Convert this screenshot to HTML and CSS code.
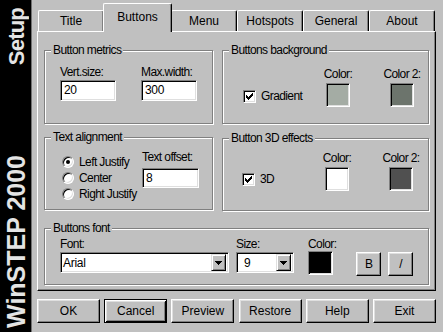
FILE: index.html
```html
<!DOCTYPE html>
<html>
<head>
<meta charset="utf-8">
<title>WinSTEP 2000 Setup</title>
<link rel="stylesheet" href="styles.css">
</head>
<body>
<div class="window">
  <aside class="strip">
    <div class="vtext v-setup">Setup</div>
    <div class="vtext v-brand">WinSTEP 2000</div>
  </aside>
  <main class="main">
    <nav class="tabs">
      <div class="tab t-title">Title</div>
      <div class="tab t-buttons active">Buttons</div>
      <div class="tab t-menu">Menu</div>
      <div class="tab t-hot">Hotspots</div>
      <div class="tab t-gen">General</div>
      <div class="tab t-about">About</div>
    </nav>
    <section class="panel">
      <div class="group g-metrics">
        <span class="caption">Button metrics</span>
        <div class="field">
          <span class="lbl">Vert.size:</span>
          <div class="edit e-metric">20</div>
        </div>
        <div class="field">
          <span class="lbl">Max.width:</span>
          <div class="edit e-metric">300</div>
        </div>
      </div>
      <div class="group g-bg">
        <span class="caption">Buttons background</span>
        <div class="check-row">
          <span class="cb"><svg width="13" height="13" viewBox="0 0 13 13"><path d="M3 5h1v3h-1zM4 6h1v3h-1zM5 7h1v3h-1zM6 6h1v3h-1zM7 5h1v3h-1zM8 4h1v3h-1zM9 3h1v3h-1z" fill="#000" shape-rendering="crispEdges"/></svg></span>
          <span class="lbl">Gradient</span>
        </div>
        <div class="color-col">
          <span class="lbl">Color:</span>
          <span class="swatch sw-green1"></span>
        </div>
        <div class="color-col">
          <span class="lbl">Color 2:</span>
          <span class="swatch sw-green2"></span>
        </div>
      </div>
      <div class="group g-align">
        <span class="caption">Text alignment</span>
        <div class="radios">
          <div class="radio-row"><span class="rb on"></span><span class="lbl">Left Justify</span></div>
          <div class="radio-row"><span class="rb"></span><span class="lbl">Center</span></div>
          <div class="radio-row"><span class="rb"></span><span class="lbl">Right Justify</span></div>
        </div>
        <div class="field f-offset">
          <span class="lbl">Text offset:</span>
          <div class="edit e-offset">8</div>
        </div>
      </div>
      <div class="group g-3d">
        <span class="caption">Button 3D effects</span>
        <div class="check-row">
          <span class="cb"><svg width="13" height="13" viewBox="0 0 13 13"><path d="M3 5h1v3h-1zM4 6h1v3h-1zM5 7h1v3h-1zM6 6h1v3h-1zM7 5h1v3h-1zM8 4h1v3h-1zM9 3h1v3h-1z" fill="#000" shape-rendering="crispEdges"/></svg></span>
          <span class="lbl">3D</span>
        </div>
        <div class="color-col">
          <span class="lbl">Color:</span>
          <span class="swatch sw-white"></span>
        </div>
        <div class="color-col">
          <span class="lbl">Color 2:</span>
          <span class="swatch sw-dark"></span>
        </div>
      </div>
      <div class="group g-font">
        <span class="caption">Buttons font</span>
        <div class="field f-font">
          <span class="lbl">Font:</span>
          <div class="combo c-font"><span class="combo-text">Arial</span><span class="drop"><svg width="7" height="4" viewBox="0 0 7 4"><path d="M0 0h7v1h-7zM1 1h5v1h-5zM2 2h3v1h-3zM3 3h1v1h-1z" fill="#000" shape-rendering="crispEdges"/></svg></span></div>
        </div>
        <div class="field f-size">
          <span class="lbl">Size:</span>
          <div class="combo c-size"><span class="combo-text">9</span><span class="drop"><svg width="7" height="4" viewBox="0 0 7 4"><path d="M0 0h7v1h-7zM1 1h5v1h-5zM2 2h3v1h-3zM3 3h1v1h-1z" fill="#000" shape-rendering="crispEdges"/></svg></span></div>
        </div>
        <div class="field f-color">
          <span class="lbl">Color:</span>
          <span class="swatch sw-black"></span>
        </div>
        <div class="style-btns">
          <div class="btn sq">B</div>
          <div class="btn sq">/</div>
        </div>
      </div>
    </section>
    <footer class="actions">
      <div class="btn act">OK</div>
      <div class="btn act default">Cancel</div>
      <div class="btn act">Preview</div>
      <div class="btn act">Restore</div>
      <div class="btn act">Help</div>
      <div class="btn act">Exit</div>
    </footer>
  </main>
</div>
</body>
</html>
```

FILE: styles.css
```css
* { box-sizing: border-box; }
html, body { margin: 0; padding: 0; }
body {
  width: 443px;
  height: 332px;
  overflow: hidden;
  background: #c0c0c0;
  font-family: "Liberation Sans", Arial, sans-serif;
  font-size: 12px;
  color: #000;
}
.window { display: flex; width: 443px; height: 332px; }

/* left black strip */
.strip {
  width: 32px;
  flex: none;
  background: #000;
  border-right: 1px solid #707070;
  display: flex;
  flex-direction: column;
  justify-content: space-between;
  align-items: center;
  padding: 8px 0 4px 1px;
}
.vtext {
  writing-mode: vertical-rl;
  transform: rotate(180deg);
  color: #e4e4e4;
  font-weight: bold;
  font-size: 25px;
  line-height: 25px;
  white-space: nowrap;
}
.v-setup { font-size: 22px; line-height: 25px; letter-spacing: -0.8px; }

/* main column */
.main {
  flex: 1;
  padding: 3px 7px 0 5px;
  display: flex;
  flex-direction: column;
}

/* tabs */
.tabs {
  display: flex;
  align-items: flex-end;
  height: 28px;
  padding-left: 1px;
  position: relative;
  z-index: 1;
}
.tab {
  width: 66px;
  height: 21px;
  border: 1px solid;
  border-color: #fff #000 transparent #fff;
  border-bottom: none;
  border-radius: 2px 2px 0 0;
  box-shadow: inset -1px 0 #808080;
  text-align: center;
  line-height: 20px;
  background: #c0c0c0;
}
.tab.active {
  width: 69px;
  height: 29px;
  margin: 0 -1px -1px -1px;
  line-height: 26px;
  position: relative;
  z-index: 2;
}

/* panel */
.panel {
  height: 260px;
  border: 1px solid;
  border-color: #fff #000 #000 #fff;
  box-shadow: inset -1px -1px #808080;
  padding: 18px 6px 0 6px;
  display: grid;
  grid-template-columns: 169px 1fr;
  grid-template-rows: auto auto auto;
  align-items: start;
  align-content: start;
  column-gap: 9px;
  row-gap: 0;
}
.group {
  position: relative;
  border: 1px solid #808080;
  box-shadow: inset 1px 1px #fff, 1px 1px #fff;
}
.caption {
  position: absolute;
  top: -8px;
  left: 6px;
  padding: 0 2px;
  line-height: 14px;
  background: #c0c0c0;
  letter-spacing: -0.6px;
  white-space: nowrap;
}
.lbl { letter-spacing: -0.6px; line-height: 14px; white-space: nowrap; }

.g-metrics { height: 74px; display: flex; padding: 14px 0 0 15px; gap: 25px; }
.g-bg { height: 74px; display: flex; align-items: flex-start; padding: 16px 0 0 20px; }
.g-align { height: 73px; margin-top: 13px; display: flex; align-items: flex-start; padding: 12px 0 0 17px; }
.g-3d { height: 73px; margin-top: 14px; display: flex; align-items: flex-start; padding: 12px 0 0 19px; }
.g-font { grid-column: 1 / 3; height: 57px; margin-top: 17px; display: flex; align-items: flex-start; padding: 8px 0 0 15px; }

.field { display: flex; flex-direction: column; align-items: flex-start; }

/* sunken edit */
.edit {
  height: 21px;
  margin-top: 1px;
  border: 1px solid;
  border-color: #808080 #fff #fff #808080;
  box-shadow: inset 1px 1px #000, inset -1px -1px #dfdfdf;
  background: #fff;
  padding-left: 3px;
  line-height: 19px;
  letter-spacing: -0.3px;
}
.e-metric { width: 56px; }
.e-offset { width: 57px; height: 20px; margin-top: 4px; line-height: 18px; }

/* checkbox */
.check-row { display: flex; align-items: center; width: 75px; }
.g-bg .check-row { margin-top: 22px; }
.g-3d .check-row { margin-top: 21px; }
.cb {
  width: 13px;
  height: 13px;
  flex: none;
  border: 1px solid;
  border-color: #808080 #fff #fff #808080;
  box-shadow: inset 1px 1px #000, inset -1px -1px #dfdfdf;
  background: #fff;
  margin-right: 5px;
  position: relative;
}
.cb svg { position: absolute; left: -1px; top: -1px; }

/* colour swatches */
.color-col { display: flex; flex-direction: column; align-items: center; width: 40px; }
.color-col + .color-col { margin-left: 24px; }
.swatch {
  display: block;
  width: 24px;
  height: 24px;
  margin-top: 2px;
  border: 1px solid;
  border-color: #808080 #fff #fff #808080;
  box-shadow: inset 1px 1px #000, inset -1px -1px #dfdfdf;
}
.sw-green1 { background: #a4aca4; }
.sw-green2 { background: #6c746c; }
.sw-white { background: #fff; }
.sw-dark { background: #505050; }
.sw-black { background: #000; width: 25px; margin-top: 0; }

/* radios */
.radios { display: flex; flex-direction: column; width: 79px; margin-top: 4px; }
.radio-row { display: flex; align-items: center; height: 16px; }
.rb {
  width: 12px;
  height: 12px;
  flex: none;
  border-radius: 50%;
  border: 1px solid;
  border-color: #808080 #fff #fff #808080;
  box-shadow: inset 1px 1px #000, inset -1px -1px #dfdfdf;
  background: #fff;
  margin-right: 5px;
  display: flex;
  align-items: center;
  justify-content: center;
}
.rb.on::after {
  content: "";
  width: 4px;
  height: 4px;
  border-radius: 50%;
  background: #000;
}
.f-offset { margin-left: 1px; }

/* combos */
.combo {
  height: 21px;
  margin-top: 1px;
  border: 1px solid;
  border-color: #808080 #fff #fff #808080;
  box-shadow: inset 1px 1px #000, inset -1px -1px #dfdfdf;
  background: #fff;
  display: flex;
  align-items: center;
  padding: 1px 2px 1px 1px;
}
.combo-text { flex: 1; padding-left: 1px; letter-spacing: -0.3px; }
.c-font { width: 169px; }
.c-size { width: 58px; }
.c-size .combo-text { padding-left: 6px; }
.drop {
  width: 15px;
  height: 17px;
  flex: none;
  border: 1px solid;
  border-color: #dfdfdf #000 #000 #dfdfdf;
  box-shadow: inset 1px 1px #fff, inset -1px -1px #808080;
  background: #c0c0c0;
  display: flex;
  align-items: center;
  justify-content: center;
}
.f-size { margin-left: 7px; }
.f-color { margin-left: 14px; }
.style-btns { display: flex; gap: 7px; margin: 15px 0 0 20px; }

/* raised buttons */
.btn {
  border: 1px solid;
  border-color: #fff #000 #000 #fff;
  box-shadow: inset -1px -1px #808080, inset 1px 1px #dfdfdf;
  background: #c0c0c0;
  display: flex;
  align-items: center;
  justify-content: center;
}
.btn.sq { width: 25px; height: 24px; }
.actions {
  display: flex;
  justify-content: space-between;
  margin-top: 8px;
}
.btn.act { width: 63px; height: 24px; }
.btn.default {
  border-color: #000;
  box-shadow: inset 1px 1px #fff, inset -1px -1px #000, inset 2px 2px #dfdfdf, inset -2px -2px #808080;
}
```
